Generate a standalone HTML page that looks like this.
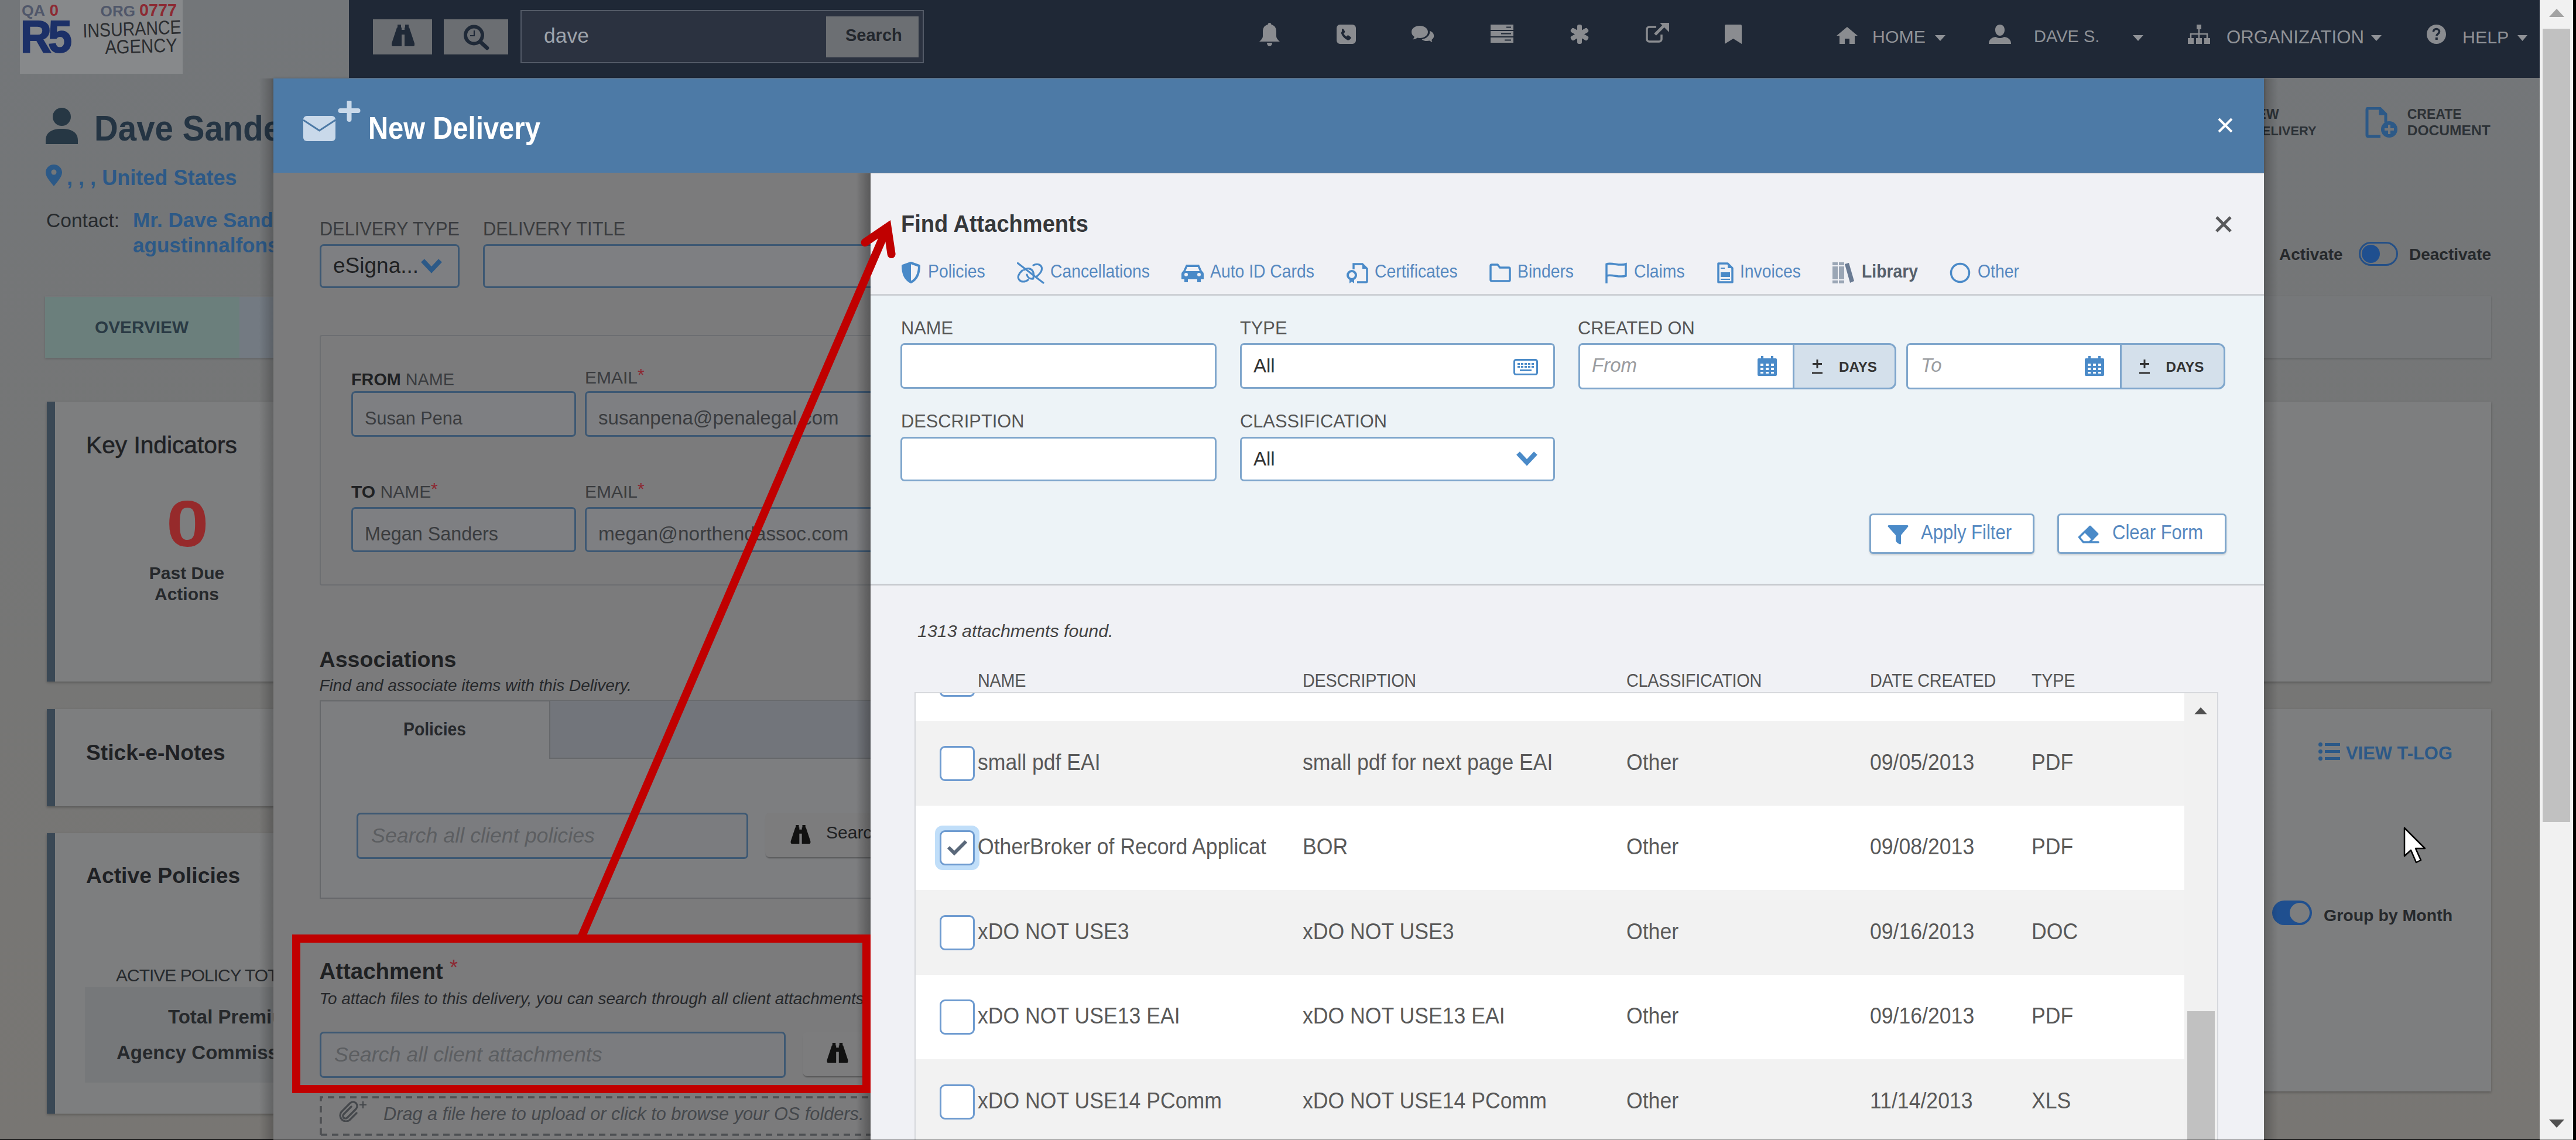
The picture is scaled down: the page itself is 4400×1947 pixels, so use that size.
<!DOCTYPE html>
<html><head><meta charset="utf-8">
<style>
html,body{margin:0;padding:0}
body{width:4400px;height:1947px;overflow:hidden;position:relative;background:linear-gradient(#737679,#767675 60%,#787673);font-family:"Liberation Sans",sans-serif}
.a{position:absolute;line-height:1;white-space:nowrap}
.b{font-weight:bold}
.i{font-style:italic}
</style></head><body>

<!-- ============ PAGE BACKGROUND ============ -->
<div class="a" style="left:34px;top:0;width:278px;height:126px;background:#87898b"></div>
<div class="a b" style="left:37.0px;top:5.1px;font-size:26.7px;color:#50576a;">QA</div>
<div class="a b" style="left:84.5px;top:4.1px;font-size:27.9px;color:#8c2a33;">0</div>
<div class="a b" style="left:171.6px;top:5.6px;font-size:26.1px;color:#50576a;">ORG</div>
<div class="a b" style="left:238.0px;top:3.3px;font-size:28.8px;color:#8c2a33;">0777</div>
<div class="a b" style="left:35px;top:24px;font-size:77px;color:#1c3068;letter-spacing:-6px;line-height:1;-webkit-text-stroke:2px #1c3068;transform:scaleX(.95);transform-origin:0 0">R5</div>
<div class="a" style="left:141px;top:36px;font-size:33px;color:#2b2d30;transform:scaleX(.865) rotate(-2deg);transform-origin:0 0">INSURANCE</div>
<div class="a" style="left:179px;top:64px;font-size:33px;color:#2b2d30;transform:scaleX(.885) rotate(-1.5deg);transform-origin:0 0">AGENCY</div>
<svg class="a" style="left:78px;top:184px" width="55" height="62" viewBox="0 0 55 62"><circle cx="27.5" cy="15.5" r="15.5" fill="#263744"/><path fill="#263744" d="M0 62v-6c0-13 9-20 27.5-20s27.5 7 27.5 20v6z"/></svg>
<div class="a b" style="left:160.6px;top:189.4px;font-size:61px;color:#243443;transform:scaleX(.926);transform-origin:0 0">Dave Sanders</div>
<svg class="a" style="left:78px;top:281px" width="28" height="37" viewBox="0 0 28 37"><path fill="#2c5987" d="M14 0c7.7 0 14 6 14 13.5 0 8-9 17-14 23.5-5-6.5-14-15.5-14-23.5 0-7.5 6.3-13.5 14-13.5z"/><circle cx="14" cy="13" r="4.5" fill="#74777a"/></svg>
<div class="a b" style="left:114.0px;top:286.4px;font-size:36.1px;color:#2c5987;">, , , United States</div>
<div class="a" style="left:79.0px;top:359.6px;font-size:33.6px;color:#26292c;">Contact:</div>
<div class="a b" style="left:227.0px;top:358.3px;font-size:35.1px;color:#2c5987;">Mr. Dave Sanders</div>
<div class="a b" style="left:227.0px;top:400.9px;font-size:35.1px;color:#2c5987;">agustinnalfonso</div>
<div class="a b" style="left:3839.0px;top:183.8px;font-size:23.0px;color:#2c3136;">NEW</div>
<div class="a b" style="left:3848.0px;top:213.2px;font-size:21.9px;color:#2c3136;">DELIVERY</div>
<svg class="a" style="left:4040px;top:183px" width="56" height="53" viewBox="0 0 56 53"><path d="M3 4a2 2 0 0 1 2-2h20l10 10v14" fill="none" stroke="#2c5987" stroke-width="5"/><path d="M3 4v44a2 2 0 0 0 2 2h21" fill="none" stroke="#2c5987" stroke-width="5"/><path d="M25 2v10h10" fill="#2c5987" stroke="#2c5987" stroke-width="3"/><circle cx="41" cy="38" r="14" fill="#2c5987"/><path d="M41 30v16M33 38h16" stroke="#74777a" stroke-width="4"/></svg>
<div class="a b" style="left:4111.7px;top:183.8px;font-size:23.0px;color:#2c3136;">CREATE</div>
<div class="a b" style="left:4111.7px;top:210.9px;font-size:24.6px;color:#2c3136;">DOCUMENT</div>
<div class="a b" style="left:3893.0px;top:421.3px;font-size:27.9px;color:#26292c;">Activate</div>
<div class="a" style="left:4029px;top:413px;width:61px;height:35px;border:3px solid #244f86;border-radius:22px"></div>
<div class="a" style="left:4034px;top:418px;width:31px;height:31px;border-radius:50%;background:#1f4f8f"></div>
<div class="a b" style="left:4115.0px;top:421.3px;font-size:28.0px;color:#26292c;">Deactivate</div>
<div class="a" style="left:77px;top:506px;width:4178px;height:106px;background:#76787a;box-shadow:0 1px 3px rgba(0,0,0,.2)"></div>
<div class="a" style="left:77px;top:507px;width:332px;height:104px;background:#6b7f7c"></div>
<div class="a" style="left:409px;top:507px;width:60px;height:104px;background:#737a82"></div>
<div class="a b" style="left:162.0px;top:544.3px;font-size:29.8px;color:#2a3a44;">OVERVIEW</div>
<div class="a" style="left:80px;top:686px;width:4175px;height:478px;background:#7d7e7f;box-shadow:0 2px 4px rgba(0,0,0,.25)"></div>
<div class="a" style="left:80px;top:686px;width:14px;height:478px;background:#3a4855"></div>
<div class="a" style="left:147.0px;top:739.5px;font-size:40.7px;color:#1f2124;-webkit-text-stroke:0.6px #1f2124">Key Indicators</div>
<div class="a b" style="left:284.0px;top:838.6px;font-size:111.5px;color:#962a2b;transform:scaleX(1.17);transform-origin:0 0">0</div>
<div class="a b" style="left:219px;top:961px;width:200px;text-align:center;font-size:30px;line-height:36px;color:#26292c">Past Due<br>Actions</div>
<div class="a" style="left:80px;top:1211px;width:1000px;height:166px;background:#7d7e7f;box-shadow:0 2px 4px rgba(0,0,0,.25)"></div>
<div class="a" style="left:80px;top:1211px;width:14px;height:166px;background:#3a4855"></div>
<div class="a b" style="left:147.0px;top:1266.5px;font-size:37.2px;color:#1f2124;">Stick-e-Notes</div>
<div class="a" style="left:80px;top:1423px;width:500px;height:479px;background:#7d7e7f;box-shadow:0 2px 4px rgba(0,0,0,.25)"></div>
<div class="a" style="left:80px;top:1423px;width:14px;height:479px;background:#3a4855"></div>
<div class="a b" style="left:147.0px;top:1476.5px;font-size:37.3px;color:#1f2124;">Active Policies</div>
<div class="a" style="left:198.0px;top:1650.6px;font-size:30.0px;color:#26292c;letter-spacing:-1px">ACTIVE POLICY TOTALS</div>
<div class="a" style="left:145px;top:1686px;width:400px;height:163px;background:#76787a"></div>
<div class="a b" style="left:287.0px;top:1720.1px;font-size:33.0px;color:#26292c;">Total Premium</div>
<div class="a b" style="left:199.0px;top:1781.1px;font-size:33.0px;color:#26292c;">Agency Commission</div>
<div class="a" style="left:3700px;top:1211px;width:555px;height:653px;background:#7d7e7f;box-shadow:0 2px 4px rgba(0,0,0,.25)"></div>
<svg class="a" style="left:3960px;top:1268px" width="37" height="31" viewBox="0 0 37 31"><g fill="#2c5987"><circle cx="3.5" cy="3.5" r="3.5"/><circle cx="3.5" cy="15.5" r="3.5"/><circle cx="3.5" cy="27.5" r="3.5"/><rect x="11" y="1" width="26" height="5"/><rect x="11" y="13" width="26" height="5"/><rect x="11" y="25" width="26" height="5"/></g></svg>
<div class="a b" style="left:4007.0px;top:1271.8px;font-size:30.9px;color:#2c5987;">VIEW T-LOG</div>
<div class="a" style="left:3881px;top:1538px;width:68px;height:42px;border-radius:21px;background:#1f4f8f"></div>
<div class="a" style="left:3911px;top:1542px;width:34px;height:34px;border-radius:50%;background:#7d7e7f"></div>
<div class="a b" style="left:3969.0px;top:1548.9px;font-size:28.5px;color:#26292c;">Group by Month</div>
<svg class="a" style="left:4104px;top:1412px" width="48" height="64" viewBox="0 0 48 64"><path d="M3 2v48l11-10 9 21 8-4-9-20h16z" fill="#fff" stroke="#000" stroke-width="2.5" stroke-linejoin="round"/></svg>
<div class="a" style="left:0;top:1945px;width:4338px;height:2px;background:#2c2c2c"></div>
<!-- ============ NAVBAR ============ -->
<div class="a" style="left:596px;top:0;width:3742px;height:133px;background:#1f2836"></div>
<div class="a" style="left:637px;top:33px;width:101px;height:60px;background:#6b6e72"></div>
<svg class="a" style="left:669px;top:42px" width="39" height="37" viewBox="0 0 39 37"><path fill="#1f2937" d="M10 0h6v5h-6zM23 0h6v5h-6zM9 5h8v32h-15a2 2 0 0 1-2-2l0-3zM22 5h8l9 27v3a2 2 0 0 1-2 2h-15zM17 9h5v8h-5z"/></svg>
<div class="a" style="left:758px;top:33px;width:110px;height:60px;background:#6b6e72"></div>
<svg class="a" style="left:790px;top:40px" width="46" height="46" viewBox="0 0 46 46"><circle cx="19.5" cy="20" r="14.5" fill="none" stroke="#1f2937" stroke-width="6"/><path d="M30 31l12 11" stroke="#1f2937" stroke-width="6.5" stroke-linecap="round"/><path d="M20 12v9h-7" fill="none" stroke="#1f2937" stroke-width="2.2"/></svg>
<div class="a" style="left:889px;top:17px;width:685px;height:87px;border:2px solid #535a67;background:#2b3240"></div>
<div class="a" style="left:929px;top:44px;font-size:35.5px;color:#9ea3aa">dave</div>
<div class="a" style="left:1411px;top:28px;width:158px;height:70px;background:#6c6f73"></div>
<div class="a b" style="left:1444px;top:46px;font-size:29px;color:#23272d">Search</div>
<!-- icons -->
<svg class="a" style="left:2150px;top:39px" width="37" height="40" viewBox="0 0 37 40"><path fill="#8a8c90" d="M18.5 0c2 0 3 1.5 3 3 6 1.5 8.5 6 8.5 12v8c0 3 2.5 6 6 9h-35c3.5-3 6-6 6-9v-8c0-6 2.5-10.5 8.5-12 0-1.5 1-3 3-3zM14 34h9c0 3-2 6-4.5 6s-4.5-3-4.5-6z"/></svg>
<svg class="a" style="left:2283px;top:42px" width="33" height="33" viewBox="0 0 33 33"><rect width="33" height="33" rx="6" fill="#8a8c90"/><path fill="#1f2836" d="M9 7.5c1-.8 2.2-.6 2.8.3l2.2 3.5c.5.9.3 1.9-.5 2.5l-1.5 1c.9 2.3 2.6 4.3 4.8 5.6l1.2-1.4c.7-.8 1.8-.9 2.6-.3l3.2 2.4c.9.7 1 1.9.2 2.8l-1.4 1.6c-1 1.1-2.6 1.5-4 .9-4.8-2-8.5-5.8-10.4-10.6-.6-1.5-.2-3.1.9-4.1z"/></svg>
<svg class="a" style="left:2411px;top:44px" width="39" height="31" viewBox="0 0 39 31"><path fill="#8a8c90" d="M14 0c7.7 0 14 4.5 14 10.5s-6.3 10.5-14 10.5c-1.5 0-3-.2-4.3-.5-2 1.7-4.7 2.7-7.7 2.9 1.5-1.4 2.5-3 2.8-4.6-3-1.9-4.8-4.9-4.8-8.3 0-6 6.3-10.5 14-10.5z"/><path fill="#8a8c90" d="M30 7.5c5.2 1.6 9 5.3 9 9.7 0 2.8-1.5 5.3-3.9 7.1.2 1.6 1.1 3.3 2.4 4.7-2.7-.2-5-1.2-6.8-2.7-1.3.3-2.6.5-4 .5-4.5 0-8.5-1.6-10.9-4.1 8.2-.6 14.7-5.9 14.7-12.3 0-1-.2-2-.5-2.9z" stroke="#1f2836" stroke-width="1.5"/></svg>
<svg class="a" style="left:2546px;top:42px" width="39" height="31" viewBox="0 0 39 31"><path fill="#8a8c90" d="M0 0h39v9h-39zM0 11h39v9h-39zM0 22h39v9h-39z"/><path fill="#1f2836" d="M27 3.5h8v2h-8zM18 14.5h17v2h-17zM24 25.5h11v2h-11z"/></svg>
<svg class="a" style="left:2682px;top:42px" width="32" height="33" viewBox="0 0 32 33"><g fill="#8a8c90"><rect x="12" y="0" width="8" height="33" rx="3"/><rect x="12" y="0" width="8" height="33" rx="3" transform="rotate(60 16 16.5)"/><rect x="12" y="0" width="8" height="33" rx="3" transform="rotate(-60 16 16.5)"/></g></svg>
<svg class="a" style="left:2811px;top:39px" width="40" height="34" viewBox="0 0 40 34"><path d="M18 7h-12a4 4 0 0 0-4 4v17a4 4 0 0 0 4 4h17a4 4 0 0 0 4-4v-8" fill="none" stroke="#8a8c90" stroke-width="3.5"/><path d="M16 20l17-17" stroke="#8a8c90" stroke-width="5"/><path fill="#8a8c90" d="M24 0h16v16z"/></svg>
<svg class="a" style="left:2946px;top:42px" width="29" height="33" viewBox="0 0 29 33"><path fill="#8a8c90" d="M0 2a2 2 0 0 1 2-2h25a2 2 0 0 1 2 2v31l-14.5-9-14.5 9z"/></svg>
<svg class="a" style="left:3137px;top:46px" width="36" height="29" viewBox="0 0 36 29"><path fill="#8a8c90" d="M18 0l18 15h-5v14h-9v-9h-8v9h-9v-14h-5z"/></svg>
<div class="a" style="left:3198px;top:48px;font-size:30.3px;color:#8f9297">HOME</div>
<svg class="a" style="left:3305px;top:60px" width="18" height="10" viewBox="0 0 18 10"><path fill="#8f9297" d="M0 0h18l-9 10z"/></svg>
<svg class="a" style="left:3397px;top:42px" width="38" height="33" viewBox="0 0 38 33"><path fill="#8a8c90" d="M19 0c5 0 8 3.5 8 9s-3 10-8 10-8-4.5-8-10 3-9 8-9zM0 33c0-7 4-11 12-12 2 1.5 4.5 2 7 2s5-.5 7-2c8 1 12 5 12 12z"/></svg>
<div class="a" style="left:3474px;top:48px;font-size:29px;color:#8f9297">DAVE S.</div>
<svg class="a" style="left:3643px;top:60px" width="18" height="10" viewBox="0 0 18 10"><path fill="#8f9297" d="M0 0h18l-9 10z"/></svg>
<svg class="a" style="left:3737px;top:42px" width="38" height="33" viewBox="0 0 38 33"><path fill="#8a8c90" d="M15 0h8v8h-8zM0 23h10v10h-10zM14 23h10v10h-10zM28 23h10v10h-10z"/><path d="M19 8v7M5 23v-7h28v7M19 15v8" fill="none" stroke="#8a8c90" stroke-width="2.5"/></svg>
<div class="a" style="left:3803px;top:48px;font-size:31.2px;color:#8f9297">ORGANIZATION</div>
<svg class="a" style="left:4050px;top:60px" width="18" height="10" viewBox="0 0 18 10"><path fill="#8f9297" d="M0 0h18l-9 10z"/></svg>
<svg class="a" style="left:4145px;top:42px" width="33" height="33" viewBox="0 0 33 33"><circle cx="16.5" cy="16.5" r="16.5" fill="#8a8c90"/><path d="M11.5 12.5c0-3 2.3-5 5-5s5 2 5 4.6c0 3.5-4.5 3.8-4.5 7" fill="none" stroke="#1f2836" stroke-width="3.5"/><rect x="14.8" y="22" width="4" height="4" fill="#1f2836"/></svg>
<div class="a" style="left:4206px;top:48px;font-size:30.4px;color:#8f9297">HELP</div>
<svg class="a" style="left:4300px;top:60px" width="17" height="10" viewBox="0 0 17 10"><path fill="#8f9297" d="M0 0h17l-8.5 10z"/></svg>

<!-- ============ SCROLLBAR ============ -->
<div class="a" style="left:4338px;top:0;width:57px;height:1947px;background:#f1f1f1"></div>
<div class="a" style="left:4343px;top:49px;width:47px;height:1355px;background:#c1c1c1"></div>
<div class="a" style="left:4395px;top:0;width:5px;height:1947px;background:#000"></div>
<svg class="a" style="left:4354px;top:14px" width="26" height="15" viewBox="0 0 26 15"><path d="M0 15L13 1L26 15z" fill="#a3a3a3"/></svg>
<svg class="a" style="left:4354px;top:1912px" width="26" height="15" viewBox="0 0 26 15"><path d="M0 0L13 14L26 0z" fill="#505050"/></svg>

<!-- ============ NEW DELIVERY MODAL ============ -->
<div class="a" style="left:467px;top:134px;width:3400px;height:161px;background:#4d7aa6;box-shadow:0 0 5px rgba(0,0,0,.2)"></div>
<div class="a" style="left:467px;top:295px;width:3400px;height:1652px;background:#7b7b7c"></div>
<div class="a" style="left:3867px;top:134px;width:24px;height:1813px;background:linear-gradient(to right,rgba(0,0,0,.22),rgba(0,0,0,0))"></div>
<div class="a" style="left:443px;top:134px;width:24px;height:1813px;background:linear-gradient(to left,rgba(0,0,0,.22),rgba(0,0,0,0))"></div>
<svg class="a" style="left:517px;top:172px" width="100" height="70" viewBox="0 0 100 70"><path d="M94.5 17h-30M79.5 2v30" stroke="#c9d9ea" stroke-width="8" stroke-linecap="round"/><rect x="1" y="26" width="55" height="43" rx="6" fill="#c9d9ea"/><path d="M1 33l27.5 18 27.5-18" fill="none" stroke="#4d7aa6" stroke-width="3"/></svg>
<div class="a b" style="left:629.0px;top:192.1px;font-size:53px;color:#ffffff;transform:scaleX(.891);transform-origin:0 0">New Delivery</div>
<svg class="a" style="left:3788px;top:201px" width="26" height="26" viewBox="0 0 26 26"><path d="M2 2l22 22M24 2l-22 22" stroke="#fff" stroke-width="4"/></svg>
<div class="a" style="left:546.0px;top:374.4px;font-size:33.8px;color:#3a3c3f;transform:scaleX(0.909);transform-origin:0 0">DELIVERY TYPE</div>
<div class="a" style="left:825.0px;top:374.3px;font-size:33.9px;color:#3a3c3f;transform:scaleX(0.909);transform-origin:0 0">DELIVERY TITLE</div>
<div class="a" style="left:546px;top:417px;width:233px;height:69px;border:3px solid #3d5873;border-radius:7px;background:#7e7f82"></div>
<div class="a" style="left:569.0px;top:434.7px;font-size:37.0px;color:#1f2123;">eSigna...</div>
<svg class="a" style="left:718px;top:441px" width="38" height="26" viewBox="0 0 38 26"><path d="M4 4l15 16 15-16" fill="none" stroke="#2c5987" stroke-width="8"/></svg>
<div class="a" style="left:825px;top:417px;width:800px;height:69px;border:3px solid #3d5873;border-radius:7px;background:#7e7f82"></div>
<div class="a" style="left:546px;top:572px;width:1200px;height:424px;border:2px solid #6c6e71;border-radius:4px"></div>
<div class="a b" style="left:600.0px;top:633.6px;font-size:28.8px;color:#1f2123;">FROM</div>
<div class="a" style="left:692.8px;top:633.6px;font-size:28.8px;color:#3a3c3f;">NAME</div>
<div class="a" style="left:999.0px;top:629.6px;font-size:30.0px;color:#3a3c3f;">EMAIL</div>
<div class="a" style="left:1089.0px;top:624.6px;font-size:30.0px;color:#8c2a33;">*</div>
<div class="a" style="left:600px;top:668px;width:378px;height:72px;border:3px solid #3d5873;border-radius:7px;background:#7e7f82"></div>
<div class="a" style="left:623.0px;top:699.1px;font-size:30.6px;color:#3a3c3f;">Susan Pena</div>
<div class="a" style="left:999px;top:668px;width:800px;height:72px;border:3px solid #3d5873;border-radius:7px;background:#7e7f82"></div>
<div class="a" style="left:1022.0px;top:697.0px;font-size:33.1px;color:#3a3c3f;">susanpena@penalegal.com</div>
<div class="a b" style="left:600.0px;top:825.2px;font-size:30.0px;color:#1f2123;">TO</div>
<div class="a" style="left:649.5px;top:825.2px;font-size:30.0px;color:#3a3c3f;">NAME</div>
<div class="a" style="left:736.1px;top:819.6px;font-size:30.0px;color:#8c2a33;">*</div>
<div class="a" style="left:999.0px;top:825.2px;font-size:30.0px;color:#3a3c3f;">EMAIL</div>
<div class="a" style="left:1089.0px;top:819.6px;font-size:30.0px;color:#8c2a33;">*</div>
<div class="a" style="left:600px;top:866px;width:378px;height:71px;border:3px solid #3d5873;border-radius:7px;background:#7e7f82"></div>
<div class="a" style="left:623.0px;top:895.7px;font-size:32.3px;color:#3a3c3f;">Megan Sanders</div>
<div class="a" style="left:999px;top:866px;width:800px;height:71px;border:3px solid #3d5873;border-radius:7px;background:#7e7f82"></div>
<div class="a" style="left:1022.0px;top:894.7px;font-size:33.4px;color:#3a3c3f;">megan@northendassoc.com</div>
<div class="a b" style="left:545.5px;top:1107.7px;font-size:37.6px;color:#1f2123;">Associations</div>
<div class="a i" style="left:545.5px;top:1157.3px;font-size:28.0px;color:#26282b;">Find and associate items with this Delivery.</div>
<div class="a" style="left:546px;top:1196px;width:1200px;height:335px;border:2px solid #66686b;background:#7d7e80"></div>
<div class="a" style="left:938px;top:1197px;width:800px;height:97px;border-left:2px solid #66686b;border-bottom:2px solid #66686b;background:#72757b"></div>
<div class="a b" style="left:689.0px;top:1228.9px;font-size:32.0px;color:#26282b;transform:scaleX(0.885);transform-origin:0 0">Policies</div>
<div class="a" style="left:609px;top:1388px;width:663px;height:73px;border:3px solid #3d5873;border-radius:7px;background:#7b7c7f"></div>
<div class="a i" style="left:634.0px;top:1409.7px;font-size:35.8px;color:#5c5e61;">Search all client policies</div>
<div class="a" style="left:1307px;top:1388px;width:400px;height:76px;border-radius:8px;background:#7c7c7d;box-shadow:0 3px 2px -1px rgba(0,0,0,.28)"></div>
<svg class="a" style="left:1350px;top:1409px" width="35" height="32" viewBox="0 0 39 37"><path fill="#111" d="M10 0h6v5h-6zM23 0h6v5h-6zM9 5h8v32h-15a2 2 0 0 1-2-2l0-3zM22 5h8l9 27v3a2 2 0 0 1-2 2h-15zM17 9h5v8h-5z"/></svg>
<div class="a" style="left:1411.0px;top:1406.6px;font-size:30.0px;color:#1f2123;">Search</div>
<div class="a b" style="left:545.5px;top:1640.2px;font-size:38.4px;color:#1f2123;">Attachment</div>
<div class="a" style="left:768.0px;top:1634.5px;font-size:36.0px;color:#8c2a33;">*</div>
<div class="a i" style="left:545.5px;top:1692.4px;font-size:27.9px;color:#26282b;">To attach files to this delivery, you can search through all client attachments.</div>
<div class="a" style="left:546px;top:1762px;width:790px;height:73px;border:3px solid #3d5873;border-radius:7px;background:#7b7c7f"></div>
<div class="a i" style="left:571.0px;top:1783.7px;font-size:35.8px;color:#5c5e61;">Search all client attachments</div>
<div class="a" style="left:1371px;top:1762px;width:300px;height:76px;border-radius:8px;background:#7c7c7d;box-shadow:0 3px 2px -1px rgba(0,0,0,.28)"></div>
<svg class="a" style="left:1411px;top:1781px" width="39" height="34" viewBox="0 0 39 37"><path fill="#111" d="M10 0h6v5h-6zM23 0h6v5h-6zM9 5h8v32h-15a2 2 0 0 1-2-2l0-3zM22 5h8l9 27v3a2 2 0 0 1-2 2h-15zM17 9h5v8h-5z"/></svg>
<svg class="a" style="left:540px;top:1866px" width="1000" height="80" viewBox="0 0 1000 80"><path d="M8 72V8H1000M8 72H1000" fill="none" stroke="#4d4f52" stroke-width="3.5" stroke-dasharray="11 8"/></svg>
<svg class="a" style="left:578px;top:1880px" width="50" height="36" viewBox="0 0 50 36"><path d="M22 10l-13 13a4 4 0 0 0 6 6l15-15a7 7 0 0 0-10-10l-15 15a10 10 0 0 0 14 14l12-12" fill="none" stroke="#45484c" stroke-width="3.2" stroke-linecap="round"/><path d="M42 1v12M36 7h12" stroke="#45484c" stroke-width="2.2"/></svg>
<div class="a i" style="left:655.0px;top:1887.6px;font-size:30.7px;color:#45484c;">Drag a file here to upload or click to browse your OS folders.</div>
<!-- ============ FIND ATTACHMENTS MODAL ============ -->
<div class="a" style="left:1462px;top:296px;width:25px;height:1651px;background:linear-gradient(to right,rgba(0,0,0,0),rgba(0,0,0,.28))"></div>
<div class="a" style="left:1487px;top:296px;width:2380px;height:1651px;background:#f0f1f5"></div>
<div class="a b" style="left:1539.0px;top:361.8px;font-size:41.1px;color:#35373a;transform:scaleX(0.926);transform-origin:0 0">Find Attachments</div>
<svg class="a" style="left:3783px;top:368px" width="30" height="30" viewBox="0 0 30 30"><path d="M3 3l24 24M27 3l-24 24" stroke="#58595b" stroke-width="5"/></svg>
<svg class="a" style="left:1539px;top:447px" width="34" height="37" viewBox="0 0 34 37"><path d="M17 2l14 5c0 14-4 23-14 28-10-5-14-14-14-28z" fill="none" stroke="#4a8ac8" stroke-width="4" stroke-linejoin="round"/><path d="M17 2l-14 5c0 14 4 23 14 28z" fill="#4a8ac8"/></svg>
<div class="a" style="left:1585.0px;top:446.6px;font-size:32.0px;color:#5588c0;transform:scaleX(0.885);transform-origin:0 0">Policies</div>
<svg class="a" style="left:1737px;top:448px" width="47" height="37" viewBox="0 0 47 37"><g fill="none" stroke="#4a8ac8" stroke-width="3.2" stroke-linecap="round"><path d="M9 14C3 19 0 26 4 30C7 34 14 34 19 30"/><path d="M17 21C18 26 22 29 28 28"/><path d="M12 13C17 9 24 10 27 15C29 19 29 23 28 26"/><path d="M28 5C33 2 40 3 42 8C44 13 40 19 34 24"/><path d="M1.5 1.5L45 35"/></g></svg>
<div class="a" style="left:1794.0px;top:446.6px;font-size:32.0px;color:#5588c0;transform:scaleX(0.885);transform-origin:0 0">Cancellations</div>
<svg class="a" style="left:2018px;top:450px" width="38" height="32" viewBox="0 0 38 32"><path fill="#4a8ac8" d="M8 2h22l5 11c2 1 3 3 3 5v9h-5v5h-6v-5h-16v5h-6v-5h-5v-9c0-2 1-4 3-5zM10 6l-3 7h24l-3-7z"/><circle cx="8" cy="19" r="3" fill="#f0f1f5"/><circle cx="30" cy="19" r="3" fill="#f0f1f5"/></svg>
<div class="a" style="left:2067.0px;top:446.6px;font-size:32.0px;color:#5588c0;transform:scaleX(0.885);transform-origin:0 0">Auto ID Cards</div>
<svg class="a" style="left:2300px;top:448px" width="37" height="36" viewBox="0 0 37 36"><path d="M12 12v-9h15l8 8v21a2 2 0 0 1-2 2h-15" fill="none" stroke="#4a8ac8" stroke-width="3.5"/><path d="M27 3v8h8z" fill="#4a8ac8"/><circle cx="9" cy="22" r="7" fill="none" stroke="#4a8ac8" stroke-width="4"/><path d="M5 28v8l4-3 4 3v-8" fill="#4a8ac8"/></svg>
<div class="a" style="left:2348.0px;top:446.6px;font-size:32.0px;color:#5588c0;transform:scaleX(0.885);transform-origin:0 0">Certificates</div>
<svg class="a" style="left:2544px;top:450px" width="37" height="32" viewBox="0 0 37 32"><path d="M2 4a2 2 0 0 1 2-2h10l4 5h15a2 2 0 0 1 2 2v19a2 2 0 0 1-2 2h-29a2 2 0 0 1-2-2z" fill="none" stroke="#4a8ac8" stroke-width="3.5"/></svg>
<div class="a" style="left:2591.5px;top:446.6px;font-size:32.0px;color:#5588c0;transform:scaleX(0.885);transform-origin:0 0">Binders</div>
<svg class="a" style="left:2742px;top:448px" width="37" height="36" viewBox="0 0 37 36"><path d="M2 36v-34" stroke="#4a8ac8" stroke-width="3.5"/><path d="M2 3c10-3 22 4 33 0v20c-11 4-23-3-33 0" fill="none" stroke="#4a8ac8" stroke-width="3.5"/></svg>
<div class="a" style="left:2791.0px;top:446.6px;font-size:32.0px;color:#5588c0;transform:scaleX(0.885);transform-origin:0 0">Claims</div>
<svg class="a" style="left:2933px;top:448px" width="28" height="36" viewBox="0 0 28 36"><path d="M2 2h16l8 8v24h-24z" fill="none" stroke="#4a8ac8" stroke-width="3.5" stroke-linejoin="round"/><path d="M18 2v8h8z" fill="#4a8ac8"/><rect x="6" y="17" width="16" height="8" fill="#4a8ac8"/><path d="M6 10h7M6 29h16" stroke="#4a8ac8" stroke-width="2"/></svg>
<div class="a" style="left:2972.0px;top:446.6px;font-size:32.0px;color:#5588c0;transform:scaleX(0.885);transform-origin:0 0">Invoices</div>
<svg class="a" style="left:3130px;top:448px" width="37" height="36" viewBox="0 0 37 36"><rect x="0" y="0" width="9" height="36" fill="#9aa6b5"/><rect x="11" y="0" width="9" height="36" fill="#9aa6b5"/><path d="M0 6h20M0 30h20" stroke="#f0f1f5" stroke-width="2"/><path d="M21 3l7-2 9 31-7 3z" fill="#6a7b93"/></svg>
<div class="a b" style="left:3180.0px;top:446.6px;font-size:32.0px;color:#56606c;transform:scaleX(0.885);transform-origin:0 0">Library</div>
<svg class="a" style="left:3330px;top:448px" width="36" height="36" viewBox="0 0 36 36"><circle cx="18" cy="18" r="15.5" fill="none" stroke="#4a8ac8" stroke-width="3.5"/></svg>
<div class="a" style="left:3378.0px;top:446.6px;font-size:32.0px;color:#5588c0;transform:scaleX(0.885);transform-origin:0 0">Other</div>
<div class="a" style="left:1487px;top:502px;width:2380px;height:3px;background:#cdd0d5"></div>
<div class="a" style="left:1487px;top:505px;width:2380px;height:493px;background:#edf3f7"></div>
<div class="a" style="left:1487px;top:997px;width:2380px;height:3px;background:#c8cbd0"></div>
<div class="a" style="left:1539.0px;top:545.9px;font-size:30.8px;color:#555555;">NAME</div>
<div class="a" style="left:2118.0px;top:545.9px;font-size:30.8px;color:#555555;">TYPE</div>
<div class="a" style="left:2695.0px;top:545.9px;font-size:30.8px;color:#555555;">CREATED ON</div>
<div class="a" style="left:1538px;top:586px;width:540px;height:78px;border:3px solid #7fa6cc;border-radius:7px;background:#fff;box-sizing:border-box;"></div>
<div class="a" style="left:2118px;top:586px;width:538px;height:78px;border:3px solid #7fa6cc;border-radius:7px;background:#fff;box-sizing:border-box;"></div>
<div class="a" style="left:2141.0px;top:608.1px;font-size:33.0px;color:#333;">All</div>
<svg class="a" style="left:2585px;top:613px" width="42" height="28" viewBox="0 0 42 28"><rect x="1.5" y="1.5" width="39" height="25" rx="3" fill="none" stroke="#4a8ac8" stroke-width="3"/><g fill="#4a8ac8"><rect x="7" y="7" width="4" height="3"/><rect x="13" y="7" width="4" height="3"/><rect x="19" y="7" width="4" height="3"/><rect x="25" y="7" width="4" height="3"/><rect x="31" y="7" width="4" height="3"/><rect x="7" y="12" width="4" height="3"/><rect x="13" y="12" width="4" height="3"/><rect x="19" y="12" width="4" height="3"/><rect x="25" y="12" width="4" height="3"/><rect x="31" y="12" width="4" height="3"/><rect x="11" y="18" width="20" height="3"/></g></svg>
<div class="a" style="left:2696px;top:586px;width:370px;height:79px;border:3px solid #7fa6cc;border-radius:7px;background:#fff;box-sizing:border-box;border-radius:7px 0 0 7px"></div>
<div class="a i" style="left:2719.0px;top:607.1px;font-size:33.0px;color:#9a9ca0;">From</div>
<svg class="a" style="left:3002px;top:606px" width="33" height="36" viewBox="0 0 33 36"><path fill="#4a8ac8" d="M6 2h4v4h13v-4h4v4h4a2 2 0 0 1 2 2v26a2 2 0 0 1-2 2h-29a2 2 0 0 1-2-2v-26a2 2 0 0 1 2-2h4z"/><g fill="#fff"><rect x="5" y="15" width="5" height="4"/><rect x="14" y="15" width="5" height="4"/><rect x="23" y="15" width="5" height="4"/><rect x="5" y="22" width="5" height="4"/><rect x="14" y="22" width="5" height="4"/><rect x="23" y="22" width="5" height="4"/><rect x="5" y="29" width="5" height="3"/><rect x="14" y="29" width="5" height="3"/><rect x="23" y="29" width="5" height="3"/></g></svg>
<div class="a" style="left:3062px;top:586px;width:177px;height:79px;border:3px solid #7fa6cc;border-radius:7px;background:#d4e0eb;box-sizing:border-box;border-radius:0 12px 12px 0"></div>
<svg class="a" style="left:3093px;top:612px" width="22" height="28" viewBox="0 0 22 28"><path d="M11 2v15M3 9.5h16M2 25h18" stroke="#333" stroke-width="3"/></svg>
<div class="a b" style="left:3141.0px;top:614.5px;font-size:24.2px;color:#333;">DAYS</div>
<div class="a" style="left:3256px;top:586px;width:369px;height:79px;border:3px solid #7fa6cc;border-radius:7px;background:#fff;box-sizing:border-box;border-radius:7px 0 0 7px"></div>
<div class="a i" style="left:3281.0px;top:607.1px;font-size:33.0px;color:#9a9ca0;">To</div>
<svg class="a" style="left:3561px;top:606px" width="33" height="36" viewBox="0 0 33 36"><path fill="#4a8ac8" d="M6 2h4v4h13v-4h4v4h4a2 2 0 0 1 2 2v26a2 2 0 0 1-2 2h-29a2 2 0 0 1-2-2v-26a2 2 0 0 1 2-2h4z"/><g fill="#fff"><rect x="5" y="15" width="5" height="4"/><rect x="14" y="15" width="5" height="4"/><rect x="23" y="15" width="5" height="4"/><rect x="5" y="22" width="5" height="4"/><rect x="14" y="22" width="5" height="4"/><rect x="23" y="22" width="5" height="4"/><rect x="5" y="29" width="5" height="3"/><rect x="14" y="29" width="5" height="3"/><rect x="23" y="29" width="5" height="3"/></g></svg>
<div class="a" style="left:3621px;top:586px;width:180px;height:79px;border:3px solid #7fa6cc;border-radius:7px;background:#d4e0eb;box-sizing:border-box;border-radius:0 12px 12px 0"></div>
<svg class="a" style="left:3652px;top:612px" width="22" height="28" viewBox="0 0 22 28"><path d="M11 2v15M3 9.5h16M2 25h18" stroke="#333" stroke-width="3"/></svg>
<div class="a b" style="left:3699.5px;top:614.5px;font-size:24.2px;color:#333;">DAYS</div>
<div class="a" style="left:1539.0px;top:704.9px;font-size:30.8px;color:#555555;">DESCRIPTION</div>
<div class="a" style="left:2118.0px;top:704.9px;font-size:30.8px;color:#555555;">CLASSIFICATION</div>
<div class="a" style="left:1538px;top:746px;width:540px;height:76px;border:3px solid #7fa6cc;border-radius:7px;background:#fff;box-sizing:border-box;"></div>
<div class="a" style="left:2118px;top:746px;width:538px;height:76px;border:3px solid #7fa6cc;border-radius:7px;background:#fff;box-sizing:border-box;"></div>
<div class="a" style="left:2141.0px;top:767.1px;font-size:33.0px;color:#333;">All</div>
<svg class="a" style="left:2589px;top:770px" width="38" height="27" viewBox="0 0 38 27"><path d="M4 4l15 16 15-16" fill="none" stroke="#4a8ac8" stroke-width="8"/></svg>
<div class="a" style="left:3193px;top:877px;width:282px;height:69px;border:3px solid #7fa6cc;border-radius:6px;background:#fff;box-sizing:border-box;box-shadow:0 2px 3px rgba(0,0,0,.15)"></div>
<svg class="a" style="left:3223px;top:897px" width="38" height="33" viewBox="0 0 38 33"><path fill="#4a8ac8" stroke="#4a8ac8" stroke-width="3" stroke-linejoin="round" d="M3 1.5h32l-12.5 15v14.5c-3-1-6-3-6-6v-8.5z"/></svg>
<div class="a" style="left:3281.0px;top:891.9px;font-size:34.4px;color:#5588c0;transform:scaleX(0.901);transform-origin:0 0">Apply Filter</div>
<div class="a" style="left:3514px;top:877px;width:289px;height:69px;border:3px solid #7fa6cc;border-radius:6px;background:#fff;box-sizing:border-box;box-shadow:0 2px 3px rgba(0,0,0,.15)"></div>
<svg class="a" style="left:3549px;top:895px" width="37" height="35" viewBox="0 0 37 35"><path d="M21 4L34 17L25 26L12 13Z" fill="#4a8ac8" stroke="#4a8ac8" stroke-width="3" stroke-linejoin="round"/><path d="M12 13L2.5 22.5L9.5 31H35M25 26L20 31" fill="none" stroke="#4a8ac8" stroke-width="3.5" stroke-linejoin="round" stroke-linecap="round"/></svg>
<div class="a" style="left:3608.0px;top:891.9px;font-size:34.4px;color:#5588c0;transform:scaleX(0.901);transform-origin:0 0">Clear Form</div>
<div class="a i" style="left:1567.0px;top:1062.3px;font-size:30.4px;color:#444;">1313 attachments found.</div>
<div class="a" style="left:1562px;top:1182px;width:2227px;height:800px;border:2px solid #d6d8dc;background:#fff;box-sizing:border-box"></div>
<div class="a" style="left:3731px;top:1184px;width:56px;height:800px;background:#f1f1f1"></div>
<svg class="a" style="left:3748px;top:1207px" width="22" height="13" viewBox="0 0 22 13"><path d="M0 13l11-12 11 12z" fill="#505050"/></svg>
<div class="a" style="left:3736px;top:1727px;width:47px;height:300px;background:#c1c1c1"></div>
<div class="a" style="left:1605px;top:1140px;width:60px;height:50px;border:3px solid #6e9bd0;border-radius:8px;box-sizing:border-box;background:#fff"></div>
<div class="a" style="left:1564px;top:1140px;width:2167px;height:44px;background:#f0f1f5"></div>
<div class="a" style="left:1562px;top:1182px;width:2227px;height:2px;background:#d6d8dc"></div>
<div class="a" style="left:1670.0px;top:1146.3px;font-size:32.0px;color:#555555;letter-spacing:-0.3px;transform:scaleX(.9);transform-origin:0 0">NAME</div>
<div class="a" style="left:2224.5px;top:1146.3px;font-size:32.0px;color:#555555;letter-spacing:-0.3px;transform:scaleX(.9);transform-origin:0 0">DESCRIPTION</div>
<div class="a" style="left:2778.0px;top:1146.3px;font-size:32.0px;color:#555555;letter-spacing:-0.3px;transform:scaleX(.9);transform-origin:0 0">CLASSIFICATION</div>
<div class="a" style="left:3194.3px;top:1146.3px;font-size:32.0px;color:#555555;letter-spacing:-0.3px;transform:scaleX(.9);transform-origin:0 0">DATE CREATED</div>
<div class="a" style="left:3470.0px;top:1146.3px;font-size:32.0px;color:#555555;letter-spacing:-0.3px;transform:scaleX(.9);transform-origin:0 0">TYPE</div>
<div class="a" style="left:1564px;top:1231.0px;width:2167px;height:144.5px;background:#f2f2f2"></div>
<div class="a" style="left:1605px;top:1273.5px;width:60px;height:60px;border:3px solid #6e9bd0;border-radius:9px;box-sizing:border-box;background:#fff"></div>
<div class="a" style="left:1670.0px;top:1281.5px;font-size:39.0px;color:#595959;transform:scaleX(.913);transform-origin:0 0">small pdf EAI</div>
<div class="a" style="left:2224.5px;top:1281.5px;font-size:39.0px;color:#595959;transform:scaleX(.913);transform-origin:0 0">small pdf for next page EAI</div>
<div class="a" style="left:2778.0px;top:1281.5px;font-size:39.0px;color:#595959;transform:scaleX(.913);transform-origin:0 0">Other</div>
<div class="a" style="left:3194.0px;top:1281.5px;font-size:39.0px;color:#595959;transform:scaleX(.913);transform-origin:0 0">09/05/2013</div>
<div class="a" style="left:3470.0px;top:1281.5px;font-size:39.0px;color:#595959;transform:scaleX(.913);transform-origin:0 0">PDF</div>
<div class="a" style="left:1564px;top:1375.5px;width:2167px;height:144.5px;background:#ffffff"></div>
<div class="a" style="left:1597px;top:1410.0px;width:76px;height:76px;border-radius:13px;background:#b9daf8;opacity:.9"></div>
<div class="a" style="left:1605px;top:1418.0px;width:60px;height:60px;border:3px solid #6e9bd0;border-radius:9px;box-sizing:border-box;background:#fff"></div>
<svg class="a" style="left:1617px;top:1432.5px" width="36" height="30" viewBox="0 0 36 30"><path d="M3 14l10 10 20-20" fill="none" stroke="#5a687a" stroke-width="6"/></svg>
<div class="a" style="left:1670.0px;top:1426.0px;font-size:39.0px;color:#595959;transform:scaleX(.913);transform-origin:0 0">OtherBroker of Record Applicat</div>
<div class="a" style="left:2224.5px;top:1426.0px;font-size:39.0px;color:#595959;transform:scaleX(.913);transform-origin:0 0">BOR</div>
<div class="a" style="left:2778.0px;top:1426.0px;font-size:39.0px;color:#595959;transform:scaleX(.913);transform-origin:0 0">Other</div>
<div class="a" style="left:3194.0px;top:1426.0px;font-size:39.0px;color:#595959;transform:scaleX(.913);transform-origin:0 0">09/08/2013</div>
<div class="a" style="left:3470.0px;top:1426.0px;font-size:39.0px;color:#595959;transform:scaleX(.913);transform-origin:0 0">PDF</div>
<div class="a" style="left:1564px;top:1520.0px;width:2167px;height:144.5px;background:#f2f2f2"></div>
<div class="a" style="left:1605px;top:1562.5px;width:60px;height:60px;border:3px solid #6e9bd0;border-radius:9px;box-sizing:border-box;background:#fff"></div>
<div class="a" style="left:1670.0px;top:1570.5px;font-size:39.0px;color:#595959;transform:scaleX(.913);transform-origin:0 0">xDO NOT USE3</div>
<div class="a" style="left:2224.5px;top:1570.5px;font-size:39.0px;color:#595959;transform:scaleX(.913);transform-origin:0 0">xDO NOT USE3</div>
<div class="a" style="left:2778.0px;top:1570.5px;font-size:39.0px;color:#595959;transform:scaleX(.913);transform-origin:0 0">Other</div>
<div class="a" style="left:3194.0px;top:1570.5px;font-size:39.0px;color:#595959;transform:scaleX(.913);transform-origin:0 0">09/16/2013</div>
<div class="a" style="left:3470.0px;top:1570.5px;font-size:39.0px;color:#595959;transform:scaleX(.913);transform-origin:0 0">DOC</div>
<div class="a" style="left:1564px;top:1664.5px;width:2167px;height:144.5px;background:#ffffff"></div>
<div class="a" style="left:1605px;top:1707.0px;width:60px;height:60px;border:3px solid #6e9bd0;border-radius:9px;box-sizing:border-box;background:#fff"></div>
<div class="a" style="left:1670.0px;top:1715.0px;font-size:39.0px;color:#595959;transform:scaleX(.913);transform-origin:0 0">xDO NOT USE13 EAI</div>
<div class="a" style="left:2224.5px;top:1715.0px;font-size:39.0px;color:#595959;transform:scaleX(.913);transform-origin:0 0">xDO NOT USE13 EAI</div>
<div class="a" style="left:2778.0px;top:1715.0px;font-size:39.0px;color:#595959;transform:scaleX(.913);transform-origin:0 0">Other</div>
<div class="a" style="left:3194.0px;top:1715.0px;font-size:39.0px;color:#595959;transform:scaleX(.913);transform-origin:0 0">09/16/2013</div>
<div class="a" style="left:3470.0px;top:1715.0px;font-size:39.0px;color:#595959;transform:scaleX(.913);transform-origin:0 0">PDF</div>
<div class="a" style="left:1564px;top:1809.0px;width:2167px;height:144.5px;background:#f2f2f2"></div>
<div class="a" style="left:1605px;top:1851.5px;width:60px;height:60px;border:3px solid #6e9bd0;border-radius:9px;box-sizing:border-box;background:#fff"></div>
<div class="a" style="left:1670.0px;top:1859.5px;font-size:39.0px;color:#595959;transform:scaleX(.913);transform-origin:0 0">xDO NOT USE14 PComm</div>
<div class="a" style="left:2224.5px;top:1859.5px;font-size:39.0px;color:#595959;transform:scaleX(.913);transform-origin:0 0">xDO NOT USE14 PComm</div>
<div class="a" style="left:2778.0px;top:1859.5px;font-size:39.0px;color:#595959;transform:scaleX(.913);transform-origin:0 0">Other</div>
<div class="a" style="left:3194.0px;top:1859.5px;font-size:39.0px;color:#595959;transform:scaleX(.913);transform-origin:0 0">11/14/2013</div>
<div class="a" style="left:3470.0px;top:1859.5px;font-size:39.0px;color:#595959;transform:scaleX(.913);transform-origin:0 0">XLS</div>
<!-- ============ ANNOTATION ============ -->
<svg class="a" style="left:0;top:0" width="4400" height="1947" viewBox="0 0 4400 1947">
<rect x="506" y="1603" width="974" height="257" fill="none" stroke="#c00000" stroke-width="14"/>
<path d="M992 1603L1514 392" stroke="#c00000" stroke-width="14" fill="none"/>
<path d="M1477.6 414L1515.7 388L1522.6 434" stroke="#c00000" stroke-width="14" fill="none" stroke-linecap="round" stroke-linejoin="miter" stroke-miterlimit="10"/>
</svg>
<div class="a" style="left:0;top:1946px;width:4400px;height:1px;background:rgba(0,0,0,.4)"></div>
</body></html>
